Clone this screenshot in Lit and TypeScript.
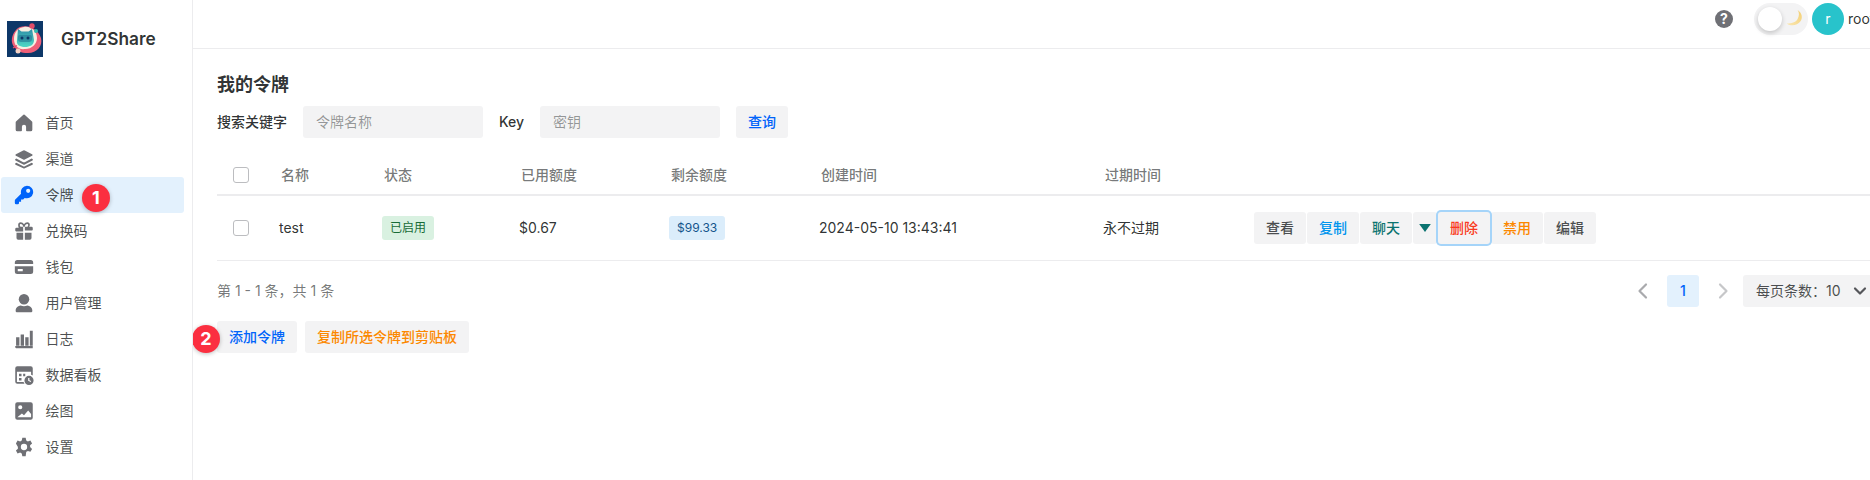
import { LitElement, html, css, svg } from "lit";
import { customElement } from "lit/decorators.js";

const icons: Record<string, unknown> = {
  home: svg`<path d="M10.600 2.600a2 2 0 0 1 2.800 0l7.900 7.200c.5.400.7 1 .7 1.500V20a2 2 0 0 1-2 2h-4.500a1 1 0 0 1-1-1v-4.500a2.500 2.500 0 0 0-5 0V21a1 1 0 0 1-1 1H4a2 2 0 0 1-2-2v-8.700c0-.6.200-1.100.7-1.500z"/>`,
  layers: svg`<path d="M11.100 1.800a2 2 0 0 1 1.800 0l8.800 4.500c.7.400.7 1.400 0 1.800l-8.800 4.600a2 2 0 0 1-1.800 0L2.300 8.100c-.7-.4-.7-1.400 0-1.800z"/><path d="M2.800 11.500l8.300 4.300a2 2 0 0 0 1.800 0l8.300-4.300 1 .6c.6.400.6 1.300 0 1.700l-9.300 4.800a2 2 0 0 1-1.800 0L1.800 13.800c-.6-.4-.6-1.300 0-1.700z"/><path d="M2.800 16.500l8.300 4.300a2 2 0 0 0 1.800 0l8.300-4.300 1 .6c.6.400.6 1.300 0 1.700l-9.300 4.300a2 2 0 0 1-1.800 0l-9.300-4.300c-.6-.4-.6-1.300 0-1.700z"/>`,
  key: svg`<path fill-rule="evenodd" d="M15.500 1a7.500 7.500 0 1 1-2.700 14.500L11 17.300H8.500v2.700H6v1.500A1.500 1.500 0 0 1 4.500 23H2.500A1.500 1.500 0 0 1 1 21.500v-3c0-.4.200-.8.500-1.100l7-7A7.500 7.500 0 0 1 15.500 1zm1.500 3.500a2.500 2.500 0 1 0 0 5 2.500 2.500 0 0 0 0-5z"/>`,
  gift: svg`<path d="M8 1.500c1.700 0 3.100 1 4 2.500.9-1.500 2.300-2.500 4-2.500a3 3 0 0 1 3 3c0 .9-.3 1.700-.8 2.500H21a1.500 1.500 0 0 1 1.500 1.500v2a1 1 0 0 1-1 1H13V7h2.500c1 0 1.500-1.300 1.500-2.300 0-.6-.4-1-1-1-1.700 0-3 1.500-3 3.300h-2c0-1.800-1.300-3.300-3-3.300-.6 0-1 .4-1 1C7 5.700 7.500 7 8.500 7H11v5.500H2.500a1 1 0 0 1-1-1v-2A1.500 1.500 0 0 1 3 8h2.800C5.300 7.200 5 6.400 5 4.500a3 3 0 0 1 3-3z"/><path d="M3 14h8v8.500H5a2 2 0 0 1-2-2zM13 14h8v6.500a2 2 0 0 1-2 2h-6z"/>`,
  card: svg`<path d="M4 3.500h16A3 3 0 0 1 23 6.500V8.500H1V6.500a3 3 0 0 1 3-3z"/><path fill-rule="evenodd" d="M1 11h22v6.500a3 3 0 0 1-3 3H4a3 3 0 0 1-3-3zm3.500 3.500v2.500h6v-2.500z"/>`,
  user: svg`<circle cx="12" cy="7.500" r="6.300"/><path d="M3 23c-.6 0-1-.4-1-1v-1c0-3.500 3-5.500 6-6 2.500 1 5.500 1 8 0 3 .5 6 2.500 6 6v1c0 .6-.4 1-1 1z"/>`,
  chart: svg`<path d="M2.500 10h4v10h-4zM8 6.500h4V20H8zM13.500 10h4v10h-4zM19 2h3.500v18H19zM1.500 20.500h21v2.500H2.500a1 1 0 0 1-1-1z"/>`,
  board: svg`<path fill-rule="evenodd" d="M4 1.500h16A2.500 2.500 0 0 1 22.500 4v8.500a7 7 0 0 0-2-.9V8h-17v12.500h8a7 7 0 0 0 1.200 2H4A2.500 2.500 0 0 1 1.500 20V4A2.500 2.500 0 0 1 4 1.500zM6 10.500h3v3H6zM11 10.500h2.500v3H11zM6 15.500h3v3H6z"/><path fill-rule="evenodd" d="M18 13a5.500 5.500 0 1 1 0 11 5.500 5.500 0 0 1 0-11zm-1 2.500V19l3 1.500.6-1.300-2.100-1V15.500z"/>`,
  image: svg`<path fill-rule="evenodd" d="M4 1.500h16A2.500 2.500 0 0 1 22.500 4v16a2.500 2.500 0 0 1-2.500 2.500H4A2.500 2.500 0 0 1 1.500 20V4A2.500 2.500 0 0 1 4 1.500zM7.500 5a2.500 2.500 0 1 0 0 5 2.500 2.500 0 0 0 0-5zM4 19.500h16.500v-4l-3.500-4-5 5.500-2.500-2z"/>`,
  gear: svg`<path fill-rule="evenodd" d="M10 1h4l.7 3.200c.7.300 1.300.6 1.900 1.100l3.100-1 2 3.400-2.400 2.200a8 8 0 0 1 0 2.200l2.400 2.200-2 3.400-3.100-1c-.6.500-1.200.8-1.900 1.100L14 23h-4l-.7-3.200a8 8 0 0 1-1.900-1.100l-3.100 1-2-3.400 2.400-2.200a8 8 0 0 1 0-2.200L2.300 7.700l2-3.400 3.100 1c.6-.5 1.200-.8 1.900-1.100zM12 8.200a3.800 3.800 0 1 0 0 7.600 3.800 3.800 0 0 0 0-7.600z"/>`,
};

const nav = [
  ["home", "首页"], ["layers", "渠道"], ["key", "令牌"], ["gift", "兑换码"], ["card", "钱包"],
  ["user", "用户管理"], ["chart", "日志"], ["board", "数据看板"], ["image", "绘图"], ["gear", "设置"],
];

@customElement("app-root")
export class AppRoot extends LitElement {
  static styles = css`
    :host { display: flex; width: 1870px; height: 480px; overflow: hidden; background: #fff; color: rgba(28,31,35,.93); font: 14px/20px Inter, "Noto Sans CJK SC", sans-serif; }
    * { box-sizing: border-box; }
    .side { width: 193px; flex: none; height: 480px; border-right: 1px solid #ececee; position: relative; }
    .brand { display: flex; align-items: center; height: 105px; padding: 0 0 27px 7px; }
    .brand svg { width: 36px; height: 36px; display: block; }
    .brand b { margin-left: 18px; font-size: 17.300px; font-weight: 600; }
    .item { display: flex; align-items: center; height: 36px; width: 183px; margin-left: 1px; padding-left: 12.500px; border-radius: 3px; gap: 12px; color: rgba(28,31,35,.8); position: relative; }
    .item svg { width: 20px; height: 20px; fill: #6f7075; flex: none; }
    .item.on { background: #e3f1fd; }
    .item.on svg { fill: #0064fa; }
    .badge { position: absolute; width: 28px; height: 28px; border-radius: 50%; background: #fb2f40; color: #fff; font-size: 18px; font-weight: 700; display: flex; align-items: center; justify-content: center; box-shadow: 0 1px 4px rgba(0,0,0,.25); }
    .b1 { left: 81px; top: 7px; }
    .b2 { left: -25px; top: 4px; }
    .main { flex: 1; min-width: 0; overflow: hidden; }
    .head { width: 1690px; height: 49px; border-bottom: 1px solid #ececee; display: flex; align-items: flex-start; padding: 3px 0 0 1522px; }
    .help { width: 18px; height: 18px; margin-top: 7px; border-radius: 50%; background: #6f7075; color: #fff; font-size: 14px; font-weight: 700; line-height: 18px; text-align: center; flex: none; }
    .toggle { margin-left: 21px; width: 54px; height: 32px; border-radius: 16px; background: #f3f3f4; position: relative; flex: none; }
    .knob { position: absolute; left: 4px; top: 4px; width: 24px; height: 24px; border-radius: 50%; background: #fff; box-shadow: 0 2px 5px rgba(0,0,0,.2); }
    .moon { position: absolute; left: 31px; top: 6px; width: 18px; height: 18px; }
    .avatar { margin-left: 4px; width: 32px; height: 32px; border-radius: 50%; background: #28c3cb; color: #fff; display: flex; align-items: center; justify-content: center; flex: none; font-size: 14px; }
    .root { margin-left: 4px; line-height: 32px; }
    .page { width: 1681px; padding: 24px 0 0 24px; }
    h1 { margin: 0; font-size: 18px; line-height: 24px; font-weight: 600; }
    .search { display: flex; align-items: center; margin-top: 9px; gap: 16px; }
    .search label { font-weight: 500; }
    .input { width: 180px; height: 32px; border-radius: 3px; background: #f3f3f4; color: rgba(28,31,35,.45); padding: 0 13px; line-height: 32px; }
    .btn { height: 32px; padding: 0 12px; border-radius: 3px; background: #f3f3f4; font-weight: 500; display: inline-flex; align-items: center; justify-content: center; flex: none; }
    .blue { color: #0064fa; } .sky { color: #0095ee; } .teal { color: #0b7370; } .red { color: #f93920; } .orange { color: #fc8800; } .dark { color: rgba(28,31,35,.8); }
    .row { display: grid; grid-template-columns: 62px 103px 137px 150px 150px 284px 151px 1fr; align-items: center; }
    .thead { height: 40px; margin-top: 18px; border-bottom: 2px solid #ececee; color: rgba(28,31,35,.62); font-weight: 500; }
    .thead span { padding-left: 2px; }
    .tbody { height: 65px; border-bottom: 1px solid #ececee; }
    .cb { width: 16px; height: 16px; margin-left: 16px; border: 1px solid #bcbdc0; border-radius: 3px; background: #fff; }
    .tag { display: inline-block; height: 24px; line-height: 24px; padding: 0 8px; border-radius: 3px; font-size: 12px; vertical-align: top; }
    .cell { display: flex; }
    .green { background: #d9f1e1; color: #176b37; }
    .bluet { background: #dbedfb; color: #14558c; }
    .actions { display: flex; gap: 1px; }
    .drop { width: 24px; padding: 0; }
    .drop svg { width: 14px; height: 14px; fill: #0b7370; }
    .focus { box-shadow: 0 0 0 2px #a5d4f9; position: relative; z-index: 1; }
    .foot { display: flex; align-items: center; margin-top: 14px; height: 32px; color: rgba(28,31,35,.62); }
    .sum { flex: 1; }
    .chev { width: 16px; height: 16px; fill: none; stroke-width: 2.200; stroke-linecap: round; stroke-linejoin: round; flex: none; overflow: visible; }
    .num { width: 32px; height: 32px; margin: 0 16px; border-radius: 3px; background: #e3f1fd; color: #0064fa; font-weight: 500; text-align: center; line-height: 32px; flex: none; }
    .size { margin-left: 12px; width: 131px; height: 32px; padding-left: 13px; border-radius: 3px; background: #f3f3f4; display: flex; align-items: center; color: rgba(28,31,35,.8); flex: none; gap: 11px; }
    .bottom { display: flex; gap: 8px; margin-top: 14px; position: relative; }
  `;

  render() {
    return html`
      <aside class="side">
        <div class="brand">
          <svg viewBox="0 0 36 36">
            <defs><linearGradient id="cat" x1="0" y1="0" x2="0" y2="1"><stop offset="0" stop-color="#2f8fa8"/><stop offset="1" stop-color="#4fd8c4"/></linearGradient></defs>
            <rect width="36" height="36" fill="#0d3768"/>
            <path d="M13 6c9-3 18 2 21 11 2 8-4 15-13 15-4 0-6 0-9-2-5-3-8-7-7-13C6 12 9 8 13 6z" fill="#ef5f78"/>
            <path d="M17 6c7-1 13 4 13 11 0 6-5 11-12 11-6 1-11-3-11-10S11 7 17 6z" fill="#f6efe2"/>
            <path d="M11 8l3.500 2.500h7L25 8l2 11c0 5-4 7-9 7s-9-2-8-7z" fill="url(#cat)"/>
            <path d="M13 14h10a2 2 0 0 1 2 2v2a3 3 0 0 1-3 3h-8a3 3 0 0 1-3-3v-2a2 2 0 0 1 2-2z" fill="#1a5f86" opacity=".45"/>
            <circle cx="15" cy="17" r="1.500" fill="#0d3768"/><circle cx="21" cy="17" r="1.500" fill="#0d3768"/>
            <circle cx="25" cy="5" r="2.700" fill="#e24d6a"/><circle cx="29" cy="10" r="2" fill="#2fb9ae"/>
            <circle cx="11" cy="30" r="2.500" fill="#f6d2c4"/>
            <path d="M6 27l4-2.500" stroke="#e24d6a" stroke-width="1.200"/>
          </svg>
          <b>GPT2Share</b>
        </div>
        ${nav.map(([ic, t]) => html`
          <div class="item ${ic === "key" ? "on" : ""}">
            <svg viewBox="0 0 24 24">${icons[ic]}</svg><span>${t}</span>
            ${ic === "key" ? html`<div class="badge b1">1</div>` : ""}
          </div>`)}
      </aside>
      <main class="main">
        <header class="head">
          <div class="help">?</div>
          <div class="toggle">
            <div class="knob"></div>
            <svg class="moon" viewBox="0 0 20 20">
              <defs><linearGradient id="mn" x1="1" y1="0" x2="0" y2="1"><stop offset="0" stop-color="#f3cf72"/><stop offset="1" stop-color="#fae7b4"/></linearGradient></defs>
              <path d="M14 1c5 3 6 9 3 13s-10 6-15 2c5 0 10-1 12-5s2-7 0-10z" fill="url(#mn)"/>
            </svg>
          </div>
          <div class="avatar">r</div>
          <div class="root">root</div>
        </header>
        <section class="page">
          <h1>我的令牌</h1>
          <div class="search">
            <label>搜索关键字</label><div class="input">令牌名称</div>
            <label>Key</label><div class="input">密钥</div>
            <div class="btn blue">查询</div>
          </div>
          <div class="row thead">
            <div class="cb"></div><span>名称</span><span>状态</span><span>已用额度</span><span>剩余额度</span><span>创建时间</span><span>过期时间</span><span></span>
          </div>
          <div class="row tbody">
            <div class="cb"></div><div>test</div>
            <div class="cell"><span class="tag green">已启用</span></div>
            <div>$0.67</div>
            <div class="cell"><span class="tag bluet">$99.33</span></div>
            <div>2024-05-10 13:43:41</div>
            <div>永不过期</div>
            <div class="actions">
              <div class="btn dark">查看</div><div class="btn sky">复制</div><div class="btn teal">聊天</div>
              <div class="btn drop"><svg viewBox="0 0 24 24"><path d="M2 5h20L12 19z"/></svg></div>
              <div class="btn red focus">删除</div><div class="btn orange">禁用</div><div class="btn dark">编辑</div>
            </div>
          </div>
          <div class="foot">
            <span class="sum">第 1 - 1 条，共 1 条</span>
            <svg class="chev" viewBox="0 0 16 16" stroke="#a9aaad"><path d="M11 1.500L4.500 8l6.500 6.500"/></svg>
            <div class="num">1</div>
            <svg class="chev" viewBox="0 0 16 16" stroke="#c6c7c9"><path d="M5 1.500L11.500 8 5 14.500"/></svg>
            <div class="size"><span>每页条数：10</span><svg class="chev" viewBox="0 0 16 16" stroke="#55565a"><path d="M3 5.500L8 10.500l5-5"/></svg></div>
          </div>
          <div class="bottom">
            <div class="badge b2">2</div>
            <div class="btn blue">添加令牌</div><div class="btn orange">复制所选令牌到剪贴板</div>
          </div>
        </section>
      </main>
    `;
  }
}
